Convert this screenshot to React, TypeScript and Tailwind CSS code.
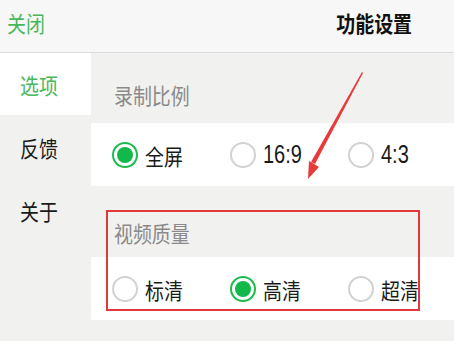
import React from "react";

const font = { fontFamily: '"Noto Sans CJK SC", "Noto Sans", sans-serif' };

function T({ children, className = "" }: { children: React.ReactNode; className?: string }) {
  return (
    <span className={"inline-block origin-left scale-x-[0.86] text-[22px] leading-none " + className}>
      {children}
    </span>
  );
}

function Radio({ checked }: { checked: boolean }) {
  return checked ? (
    <span className="flex h-[26px] w-[26px] shrink-0 items-center justify-center rounded-full border-[2px] border-[#1dbb4e] bg-white">
      <span className="h-[16px] w-[16px] rounded-full bg-[#12b94a]" />
    </span>
  ) : (
    <span className="h-[26px] w-[26px] shrink-0 rounded-full border-[2px] border-[#d2d2d2] bg-white" />
  );
}

function Row({ items, sel }: { items: string[]; sel: number }) {
  return (
    <div className="flex h-[63px] items-center bg-white pl-[21px]">
      {items.map((t, i) => (
        <div key={t} className="flex w-[118px] items-center gap-[7px]">
          <Radio checked={i === sel} />
          {/[0-9]/.test(t) ? (
            <span className="inline-block origin-left scale-x-[0.8] text-[25px] leading-none text-[#1a1a1a]" style={{ fontFamily: '"Liberation Sans", sans-serif' }}>
              {t}
            </span>
          ) : (
            <T className="text-[#1a1a1a]">{t}</T>
          )}
        </div>
      ))}
    </div>
  );
}

export default function App() {
  return (
    <div className="relative h-[341px] w-[454px] overflow-hidden bg-[#f1f1ef]" style={font}>
      <div className="flex h-[53px] items-center justify-between border-b border-[#dcdcdc] bg-[#f7f7f7] pb-[8px] pl-[7px] pr-[42px]">
        <T className="text-[#47b85a]">关闭</T>
        <span className="inline-block origin-right scale-x-[0.86] text-[22px] font-bold leading-none text-[#111]">功能设置</span>
      </div>
      <div className="flex">
        <div className="w-[91px] shrink-0">
          <div className="flex h-[62px] items-center bg-white pl-[20px]">
            <T className="text-[#47b85a]">选项</T>
          </div>
          <div className="flex h-[63px] items-center pl-[20px]">
            <T className="text-[#1a1a1a]">反馈</T>
          </div>
          <div className="flex h-[63px] items-center pl-[20px]">
            <T className="text-[#1a1a1a]">关于</T>
          </div>
        </div>
        <div className="flex-1">
          <div className="flex h-[70px] items-center pl-[23px] pt-[12px]">
            <T className="text-[#8a8a8a]">录制比例</T>
          </div>
          <Row items={["全屏", "16:9", "4:3"]} sel={0} />
          <div className="flex h-[71px] items-center pl-[23px] pt-[20px]">
            <T className="text-[#8a8a8a]">视频质量</T>
          </div>
          <Row items={["标清", "高清", "超清"]} sel={1} />
        </div>
      </div>
      <div className="pointer-events-none absolute left-[106px] top-[210px] h-[101px] w-[314px] border-[2px] border-[#e0383b]" />
      <svg className="pointer-events-none absolute left-0 top-0" width="454" height="341">
        <polygon points="362,72 363,73 315,164 311,162" fill="#e8393b" />
        <polygon points="308,179 309,161 319,167" fill="#e8393b" />
      </svg>
    </div>
  );
}
